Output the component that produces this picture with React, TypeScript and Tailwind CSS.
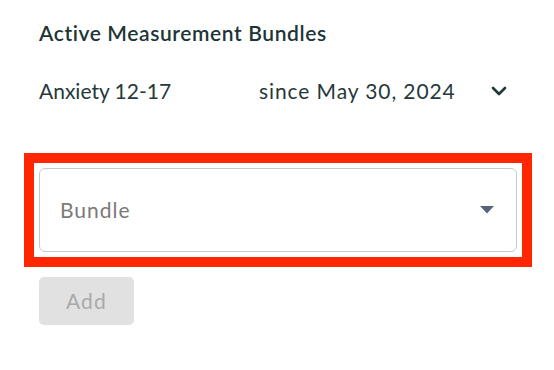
import { ChevronDown } from "lucide-react";

type Bundle = {
    name: string;
    since: string;
};

const activeBundles: Bundle[] = [{ name: "Anxiety 12-17", since: "May 30, 2024" }];

function BundleRow({ bundle }: { bundle: Bundle }) {
    return (
        <div className="flex items-center h-[40px] text-[21px] text-[#26393a]">
            <span className="w-[220px]">{bundle.name}</span>
            <span className="w-[228px] tracking-[0.9px]">since {bundle.since}</span>
            <ChevronDown size={24} strokeWidth={2.6} className="text-[#1e3a38]" />
        </div>
    );
}

export default function App() {
    return (
        <div
            className="w-[554px] h-[370px] bg-white pt-[17px]"
            style={{ fontFamily: "Lato, 'Noto Sans', sans-serif" }}
        >
            <div className="pl-[39px]">
                <h2 className="text-[21px] leading-[32px] font-semibold tracking-[0.6px] text-[#1d3536]">
                    Active Measurement Bundles
                </h2>
                <div className="mt-[22px]">
                    {activeBundles.map((b) => (
                        <BundleRow key={b.name} bundle={b} />
                    ))}
                </div>
            </div>

            <div className="ml-[24px] mt-[42px] w-[508px] border-[10px] border-[#ff2600] p-[5px]">
                <div className="flex items-center justify-between h-[84px] rounded-[6px] border border-[#c9c9c9] pl-[20px] pr-[22px]">
                    <span className="text-[21px] tracking-[1px] text-[#7a7a7a]">Bundle</span>
                    <svg width="14" height="8" viewBox="0 0 14 8">
                        <path d="M0 0 L14 0 L7 7.5 Z" fill="#52657a" />
                    </svg>
                </div>
            </div>

            <div className="pl-[39px] mt-[10px]">
                <button
                    disabled
                    className="w-[95px] h-[48px] rounded-[5px] bg-[#e1e1e1] text-[21px] tracking-[1.2px] text-[#a9a9a9]"
                >
                    Add
                </button>
            </div>
        </div>
    );
}
